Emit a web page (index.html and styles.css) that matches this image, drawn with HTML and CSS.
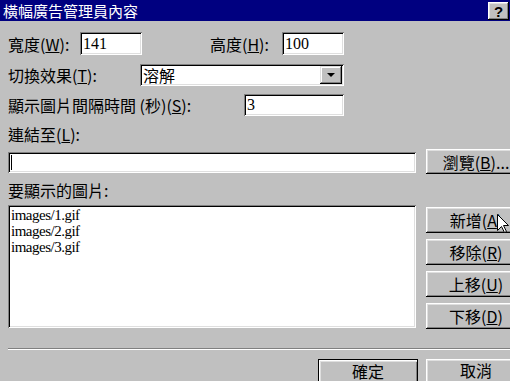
FILE: index.html
```html
<!DOCTYPE html>
<html lang="zh-Hant">
<head>
<meta charset="utf-8">
<title>橫幅廣告管理員內容</title>
<link rel="stylesheet" href="styles.css">
</head>
<body>
<div class="window">
  <div class="titlebar">
    <span class="title">橫幅廣告管理員內容</span>
    <div class="help">?</div>
  </div>
  <div class="content">
    <div class="row r1">
      <span class="lbl w72">寬度(<u>W</u>):</span>
      <div class="field num f62 h23">141</div>
      <span class="lbl w72 ml68">高度(<u>H</u>):</span>
      <div class="field num f62 h23">100</div>
    </div>
    <div class="row r2">
      <span class="lbl w132">切換效果(<u>T</u>):</span>
      <div class="field combo">
        <span class="combo-text">溶解</span>
        <div class="drop"><span class="tri"></span></div>
      </div>
    </div>
    <div class="row r3">
      <span class="lbl w236">顯示圖片間隔時間 (秒)(<u>S</u>):</span>
      <div class="field num f100 h22">3</div>
    </div>
    <div class="lblrow r4">連結至(<u>L</u>):</div>
    <div class="row r5">
      <div class="field link"><span class="caret"></span></div>
      <div class="btn">瀏覽(<u>B</u>)...</div>
    </div>
    <div class="lblrow r6">要顯示的圖片:</div>
    <div class="row r7">
      <div class="field list">
        <div>images/1.gif</div>
        <div>images/2.gif</div>
        <div>images/3.gif</div>
      </div>
      <div class="btncol">
        <div class="btn tall">新增(<u>A</u>)</div>
        <div class="btn tall">移除(<u>R</u>)</div>
        <div class="btn tall">上移(<u>U</u>)</div>
        <div class="btn tall">下移(<u>D</u>)</div>
      </div>
    </div>
    <div class="sep"></div>
    <div class="footer">
      <div class="btn tall default"><span class="ftext">確定</span></div>
      <div class="btn tall"><span class="ftext">取消</span></div>
    </div>
  </div>
</div>
<svg class="cursor" width="12" height="19" viewBox="0 0 12 19">
  <path d="M0.5 0.5 V16.5 L4.5 12.5 L7.5 18.5 L9.5 17.5 L6.5 11.5 H11.5 Z" fill="#fff" stroke="#000" stroke-width="1"/>
</svg>
</body>
</html>
```
FILE: styles.css
```css
html, body {
  margin: 0;
  padding: 0;
}
body {
  position: relative;
  width: 510px;
  height: 381px;
  overflow: hidden;
  background: #c0c0c0;
  font-family: "Noto Sans CJK TC", "Noto Sans", sans-serif;
  font-size: 16px;
  color: #000;
}
.window {
  width: 540px;
}
.titlebar {
  width: 510px;
  height: 21px;
  box-sizing: border-box;
  background: #000080;
  display: flex;
  align-items: center;
  justify-content: space-between;
  padding: 0 1px 0 3px;
}
.title {
  color: #fff;
  font-size: 15px;
  line-height: 21px;
}
.help {
  width: 21px;
  height: 18px;
  margin-top: 1px;
  box-sizing: border-box;
  background: #c0c0c0;
  box-shadow: inset -1px -1px #000, inset 1px 1px #fff, inset -2px -2px #808080, inset 2px 2px #dfdfdf;
  display: flex;
  align-items: center;
  justify-content: center;
  font-family: "Liberation Sans", Arial, sans-serif;
  font-weight: bold;
  font-size: 15px;
  line-height: 1;
}
.content {
  padding-left: 8px;
}
.row {
  display: flex;
  align-items: center;
}
.lbl {
  line-height: 20px;
  white-space: nowrap;
}
.lblrow {
  height: 20px;
  line-height: 20px;
  white-space: nowrap;
}
.w72 { width: 72px; }
.w132 { width: 132px; }
.w236 { width: 236px; }
.ml68 { margin-left: 68px; }
.r1 { margin-top: 11px; height: 23px; }
.r2 { margin-top: 9px; height: 22px; }
.r3 { margin-top: 8px; height: 22px; }
.r4 { margin-top: 8px; }
.r5 { margin-top: 5px; align-items: flex-start; }
.r6 { margin-top: 6px; }
.r7 { margin-top: 5px; align-items: flex-start; }

.field {
  background: #fff;
  box-sizing: border-box;
  box-shadow: inset 1px 1px #808080, inset -1px -1px #fff, inset 2px 2px #000, inset -2px -2px #dfdfdf;
}
.num {
  font-family: "Liberation Serif", "Times New Roman", serif;
  font-size: 16px;
  padding: 0 3px;
  display: flex;
  align-items: center;
}
.f62 { width: 62px; }
.f100 { width: 100px; }
.h23 { height: 23px; }
.h22 { height: 22px; }
.combo {
  width: 204px;
  height: 22px;
  padding: 2px;
  display: flex;
  align-items: center;
  justify-content: space-between;
}
.combo-text {
  padding-left: 1px;
  line-height: 18px;
}
.drop {
  width: 22px;
  height: 18px;
  box-sizing: border-box;
  background: #c0c0c0;
  box-shadow: inset -1px -1px #000, inset 1px 1px #dfdfdf, inset -2px -2px #808080, inset 2px 2px #fff;
  display: flex;
  align-items: center;
  justify-content: center;
}
.tri {
  width: 0;
  height: 0;
  border-left: 4px solid transparent;
  border-right: 4px solid transparent;
  border-top: 4px solid #000;
}
.link {
  width: 408px;
  height: 21px;
  margin-top: 3px;
  padding: 3px 0 0 3px;
}
.caret {
  display: block;
  width: 0;
  height: 15px;
  border-left: 1px solid #000;
}
.btn {
  width: 100px;
  height: 25px;
  box-sizing: border-box;
  margin-left: 10px;
  background: #c0c0c0;
  box-shadow: inset -1px -1px #000, inset 1px 1px #fff, inset -2px -2px #808080, inset 2px 2px #dfdfdf;
  display: flex;
  align-items: center;
  justify-content: center;
  line-height: 20px;
  white-space: nowrap;
}
.tall {
  height: 26px;
}
.list {
  width: 408px;
  height: 123px;
  padding: 2px 3px;
  font-family: "Liberation Serif", "Times New Roman", serif;
  font-size: 15px;
  letter-spacing: -0.5px;
  line-height: 16px;
}
.btncol {
  display: flex;
  flex-direction: column;
  gap: 6px;
  padding-top: 2px;
}
.sep {
  margin-top: 19px;
  height: 0;
  border-top: 1px solid #808080;
  border-bottom: 1px solid #fff;
}
.footer {
  display: flex;
  margin-top: 9px;
  padding-left: 310px;
  gap: 8px;
}
.footer .btn {
  margin-left: 0;
  height: 23px;
  align-items: flex-start;
  padding-top: 3px;
  box-shadow: inset 1px 1px #fff, inset 2px 2px #dfdfdf;
}
.footer .default {
  border: 1px solid #000;
  border-bottom: 0;
  box-shadow: inset 1px 1px #fff, inset 2px 2px #dfdfdf, inset -1px 0 #808080;
}
.ftext {
  line-height: 17px;
}
.cursor {
  position: absolute;
  left: 497px;
  top: 214px;
}
```
